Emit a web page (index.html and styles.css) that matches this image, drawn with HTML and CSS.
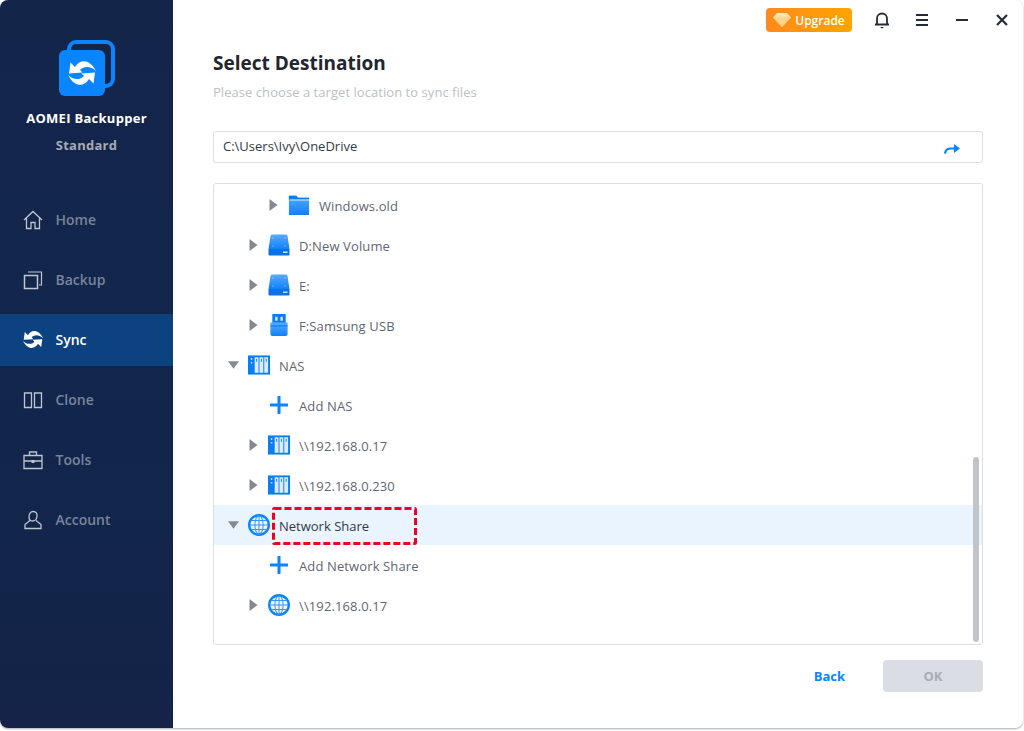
FILE: index.html
```html
<!DOCTYPE html>
<html lang="en">
<head>
<meta charset="utf-8">
<title>AOMEI Backupper</title>
<link rel="stylesheet" href="styles.css">
</head>
<body>
<svg class="defs" aria-hidden="true">
  <defs>
    <linearGradient id="blue" x1="0" y1="0" x2="0" y2="1"><stop offset="0" stop-color="#58abff"/><stop offset="1" stop-color="#0f80f7"/></linearGradient>
    <linearGradient id="gem" x1="0" y1="0" x2="0" y2="1"><stop offset="0" stop-color="#ffe9b8"/><stop offset="1" stop-color="#ffc766"/></linearGradient>
    <symbol id="i-sync" viewBox="9 20 28 26">
      <g fill="#fff">
        <path d="M16 27C21 18.500 31 19 37 31 32 26 25 25.500 21 30L23.500 32.500 10 33.500 11.500 22.500z"/>
      </g>
      <g fill="#fff" transform="rotate(180 23 33)">
        <path d="M16 27C21 18.500 31 19 37 31 32 26 25 25.500 21 30L23.500 32.500 10 33.500 11.500 22.500z"/>
      </g>
    </symbol>
    <symbol id="i-folder" viewBox="0 0 24 22">
      <path d="M1 1h8l2 2h12v18a1 1 0 0 1-1 1H2a1 1 0 0 1-1-1z" fill="url(#blue)"/>
      <path d="M1 1h8l2 2h12v2H1z" fill="#0a7df5"/>
      <path d="M2 5h21v1H2z" fill="#d8ecff"/>
    </symbol>
    <symbol id="i-drive" viewBox="0 0 22 22">
      <path d="M2.500 2a1.500 1.500 0 0 1 1.500-1.500h14A1.500 1.500 0 0 1 19.500 2L21.500 15H.5z" fill="url(#blue)"/>
      <path d="M.5 15h21v5.500a1 1 0 0 1-1 1h-19a1 1 0 0 1-1-1z" fill="#0a72e8"/>
      <path d="M15 17.500h4.500v1.400H15z" fill="#cfe6ff"/>
      <circle cx="5" cy="4" r=".6" fill="#cfe6ff"/><circle cx="17" cy="4" r=".6" fill="#cfe6ff"/><circle cx="5" cy="12" r=".6" fill="#cfe6ff"/><circle cx="17" cy="12" r=".6" fill="#cfe6ff"/>
    </symbol>
    <symbol id="i-usb" viewBox="0 0 22 23">
      <path d="M4 0h14v10H4z" fill="#0a7df5"/>
      <path d="M7 3h2.500v4H7zM12.500 3H15v4h-2.500z" fill="#d5e9ff"/>
      <path d="M2 9h18v12a2 2 0 0 1-2 2H4a2 2 0 0 1-2-2z" fill="url(#blue)"/>
      <path d="M2 12h18v1H2z" fill="#0a72e8"/>
    </symbol>
    <symbol id="i-nas" viewBox="0 0 23 20">
      <path d="M0 0h23v20H0z" fill="#0a7df5"/>
      <path d="M7 2h4v16H7zM12 2h4v16h-4zM17 2h4v16h-4z" fill="#dcedff"/>
      <path d="M3 3h1.500v1.500H3zM3 7h1.500v1.500H3z" fill="#fff"/>
      <path d="M8.500 3.500h1v3h-1zM13.500 3.500h1v3h-1zM18.500 3.500h1v3h-1z" fill="#0a7df5"/>
    </symbol>
    <symbol id="i-globe" viewBox="0 0 24 24">
      <circle cx="12" cy="12" r="10.700" fill="#eef6ff" stroke="#0a84ff" stroke-width="2.600"/>
      <g fill="none" stroke="#2f97ff" stroke-width="1.100">
        <ellipse cx="12" cy="12" rx="4.500" ry="10"/>
        <path d="M12 2v20M2 12h20M3.500 7.200h17M3.500 16.800h17"/>
      </g>
    </symbol>
    <symbol id="i-plus" viewBox="0 0 18 18">
      <path d="M7.500 0h3v7.500H18v3h-7.500V18h-3v-7.500H0v-3h7.500z" fill="#0a84ff"/>
    </symbol>
    <symbol id="i-right" viewBox="0 0 10 12"><path d="M1 0l8 6-8 6z" fill="#838a94"/></symbol>
    <symbol id="i-down" viewBox="0 0 12 10"><path d="M0 1h12L6 9z" fill="#838a94"/></symbol>
  </defs>
</svg>

<div class="window">
  <aside class="sidebar">
    <div class="brand">
      <svg class="logo" viewBox="0 0 56 56">
        <rect x="10" y="2" width="44" height="44" rx="7" fill="none" stroke="#0a84ff" stroke-width="4"/>
        <rect x="0" y="10" width="46" height="46" rx="6" fill="#0a84ff"/>
        <use href="#i-sync" x="9" y="20" width="28" height="26"/>
      </svg>
      <div class="brand-name">AOMEI Backupper</div>
      <div class="brand-edition">Standard</div>
    </div>
    <nav class="nav">
      <a class="nav-item">
        <svg class="nav-icon" viewBox="0 0 20 20"><path d="M1 10L10 1.500 19 10M3.500 8v10.500h4.500V12.500h4v6h4.500V8" fill="none" stroke="#c0c5cf" stroke-width="1.300"/></svg>
        <span>Home</span>
      </a>
      <a class="nav-item">
        <svg class="nav-icon" viewBox="0 0 20 20"><path d="M1.500 5.500h13v13h-13z" fill="none" stroke="#c0c5cf" stroke-width="1.500"/><path d="M5 2h13.500v13H16" fill="none" stroke="#c0c5cf" stroke-width="1.200"/></svg>
        <span>Backup</span>
      </a>
      <a class="nav-item active">
        <svg class="nav-icon" viewBox="0 0 20 20"><use href="#i-sync" x="0" y="0" width="20" height="19"/></svg>
        <span>Sync</span>
      </a>
      <a class="nav-item">
        <svg class="nav-icon" viewBox="0 0 20 20"><path d="M1.500 3h7v14.500h-7zM11.500 3h7v14.500h-7z" fill="none" stroke="#c0c5cf" stroke-width="1.300"/></svg>
        <span>Clone</span>
      </a>
      <a class="nav-item">
        <svg class="nav-icon" viewBox="0 0 20 20"><path d="M1 5.500h18v13H1zM6.500 5.500V2h7v3.500M1 11h18" fill="none" stroke="#c0c5cf" stroke-width="1.300"/><path d="M8.500 10h3v3h-3z" fill="#c0c5cf"/></svg>
        <span>Tools</span>
      </a>
      <a class="nav-item">
        <svg class="nav-icon" viewBox="0 0 20 20"><path d="M10 1.500c3 0 4.500 2 4 5-.4 2.500-2 4.500-4.500 4.500-2.300 0-3.500-1.800-3.500-4 0-3.500 2-5.500 4-5.500zM7 10.500l-5 4v4h16v-4l-5-4" fill="none" stroke="#c0c5cf" stroke-width="1.300"/></svg>
        <span>Account</span>
      </a>
    </nav>
  </aside>

  <main class="main">
    <header class="topbar">
      <button class="upgrade">
        <svg class="gem" viewBox="0 0 18 14"><path d="M4 0h10l4 4.500L9 14 0 4.500z" fill="url(#gem)"/><path d="M0 4.500h18L9 14z" fill="#ffd488"/></svg>
        <span>Upgrade</span>
      </button>
      <svg class="tool bell" viewBox="0 0 16 18"><path d="M3 13V7.500a5 5 0 0 1 10 0V13M1 13.500h14" fill="none" stroke="#262b3a" stroke-width="1.800"/><path d="M6 16h4l-2 1.500z" fill="#262b3a"/></svg>
      <svg class="tool" viewBox="0 0 14 14"><path d="M1 2h12M1 7h12M1 12h12" stroke="#262b3a" stroke-width="2"/></svg>
      <svg class="tool" viewBox="0 0 14 14"><path d="M1 7h12" stroke="#262b3a" stroke-width="2"/></svg>
      <svg class="tool" viewBox="0 0 14 14"><path d="M2 2l10 10M12 2L2 12" stroke="#262b3a" stroke-width="2.200"/></svg>
    </header>

    <h1 class="title">Select Destination</h1>
    <p class="subtitle">Please choose a target location to sync files</p>

    <div class="path">
      <span>C:\Users\Ivy\OneDrive</span>
      <svg class="go" viewBox="0 0 16 12"><path d="M1 10.500C1.500 6.500 4 5.500 7 5.500h5" fill="none" stroke="#0a84ff" stroke-width="2.200"/><path d="M10 1L16 5.500 10 10z" fill="#0a84ff"/></svg>
    </div>

    <section class="tree">
      <div class="row lvl2"><svg class="arrow"><use href="#i-right"/></svg><svg class="ico"><use href="#i-folder"/></svg><span class="label">Windows.old</span></div>
      <div class="row lvl1"><svg class="arrow"><use href="#i-right"/></svg><svg class="ico"><use href="#i-drive"/></svg><span class="label">D:New Volume</span></div>
      <div class="row lvl1"><svg class="arrow"><use href="#i-right"/></svg><svg class="ico"><use href="#i-drive"/></svg><span class="label">E:</span></div>
      <div class="row lvl1"><svg class="arrow"><use href="#i-right"/></svg><svg class="ico"><use href="#i-usb"/></svg><span class="label">F:Samsung USB</span></div>
      <div class="row"><svg class="arrow"><use href="#i-down"/></svg><svg class="ico"><use href="#i-nas"/></svg><span class="label">NAS</span></div>
      <div class="row lvl1"><span class="arrow"></span><svg class="ico plus"><use href="#i-plus"/></svg><span class="label">Add NAS</span></div>
      <div class="row lvl1"><svg class="arrow"><use href="#i-right"/></svg><svg class="ico"><use href="#i-nas"/></svg><span class="label">\\192.168.0.17</span></div>
      <div class="row lvl1"><svg class="arrow"><use href="#i-right"/></svg><svg class="ico"><use href="#i-nas"/></svg><span class="label">\\192.168.0.230</span></div>
      <div class="row selected"><svg class="arrow"><use href="#i-down"/></svg><svg class="ico"><use href="#i-globe"/></svg><span class="label">Network Share</span>
        <svg class="callout" viewBox="0 0 145 38"><rect x="1.500" y="1.500" width="142" height="35" rx="1" fill="none" stroke="#f0001c" stroke-width="3" stroke-dasharray="7 3"/></svg>
      </div>
      <div class="row lvl1"><span class="arrow"></span><svg class="ico plus"><use href="#i-plus"/></svg><span class="label">Add Network Share</span></div>
      <div class="row lvl1"><svg class="arrow"><use href="#i-right"/></svg><svg class="ico"><use href="#i-globe"/></svg><span class="label">\\192.168.0.17</span></div>
      <div class="scrollbar"></div>
    </section>

    <footer class="actions">
      <a class="back">Back</a>
      <button class="ok" disabled>OK</button>
    </footer>
  </main>
</div>
</body>
</html>
```

FILE: styles.css
```css
* { box-sizing: border-box; }
html, body { margin: 0; height: 100%; background: #fff; overflow: hidden; }
body { font-family: "Open Sans", "Noto Sans", sans-serif; font-size: 13px; }
.defs { display: block; width: 0; height: 0; overflow: hidden; }

.window {
  width: 1023px;
  height: 728px;
  display: flex;
  border-radius: 8px;
  overflow: hidden;
  background: #fff;
  box-shadow: 0 1px 2px #a9adb6;
}

/* sidebar */
.sidebar {
  width: 173px;
  flex: none;
  background: linear-gradient(180deg, #14254a 0%, #12264c 60%, #142347 100%);
  display: flex;
  flex-direction: column;
}
.brand { display: flex; flex-direction: column; align-items: center; padding: 40px 0 0 0; height: 194px; }
.logo { width: 56px; height: 56px; display: block; margin-bottom: 12px; }
.brand-name { color: #fff; font-weight: 700; font-size: 13px; line-height: 20px; letter-spacing: .28px; }
.brand-edition { color: #a5abb7; font-weight: 700; font-size: 13px; line-height: 20px; margin-top: 7px; letter-spacing: .25px; }
.nav { display: flex; flex-direction: column; gap: 8px; }
.nav-item { height: 52px; display: flex; align-items: center; gap: 12.5px; padding-left: 23px; color: #78849c; font-size: 14px; font-weight: 600; }
.nav-item span { padding-bottom: 2px; }
.nav-item.active { background: #0c4280; color: #fff; }
.nav-icon { width: 20px; height: 20px; flex: none; }

/* main */
.main { flex: 1; min-width: 0; padding: 0 40px; position: relative; }
.topbar { height: 40px; margin-right: -40px; padding-top: 8px; display: flex; align-items: flex-start; }
.upgrade {
  width: 86px; height: 24px; margin-left: 553px; padding: 0;
  border: 0; border-radius: 4px;
  background: linear-gradient(90deg, #ff8a1c, #ffa400);
  color: #fff; font: 600 12px "Open Sans", sans-serif;
  display: flex; align-items: center; justify-content: center; gap: 4px;
}
.gem { width: 18px; height: 14px; }
.tool { width: 14px; height: 14px; margin-top: 5px; margin-left: 26px; flex: none; }
.tool.bell { width: 16px; height: 18px; margin-top: 3px; margin-left: 22px; margin-right: -1px; }
.title { margin: 9px 0 0; font-size: 19px; line-height: 28px; font-weight: 700; color: #22252d; }
.subtitle { margin: 6px 0 0; font-size: 13px; line-height: 18px; color: #bcbfc5; font-weight: 400; letter-spacing: .05px; }
.path {
  margin-top: 30px; height: 32px;
  border: 1px solid #dcdfe3; border-radius: 3px;
  display: flex; align-items: center; justify-content: space-between;
  padding: 0 22px 0 9px; color: #333a45;
}
.path span { padding-bottom: 2px; }
.go { width: 16px; height: 12px; margin-top: 3px; }

/* tree */
.tree {
  margin-top: 20px; height: 462px; position: relative;
  border: 1px solid #dcdfe3; border-radius: 3px;
  padding-top: 1px; color: #5f6672; overflow: hidden;
}
.row { height: 40px; display: flex; align-items: center; padding-left: 14px; position: relative; }
.row.lvl1 { padding-left: 34px; }
.row.lvl2 { padding-left: 54px; }
.row.selected { background: #e9f4fe; color: #333a45; }
.label { padding-top: 2px; letter-spacing: .12px; }
.selected .label { letter-spacing: 0; }
.arrow { width: 11px; height: 12px; flex: none; margin-right: 9px; }
.ico { width: 22px; height: 22px; flex: none; margin-right: 9px; }
.ico.plus { width: 18px; height: 18px; margin: 0 11px 0 2px; }
.callout { position: absolute; left: 58px; top: 2px; width: 145px; height: 38px; }
.scrollbar {
  position: absolute; right: 3px; top: 273px; width: 6px; height: 185px;
  background: #c1c5cb; border-radius: 3px;
}

/* footer */
.actions { margin-top: 15px; display: flex; align-items: center; justify-content: flex-end; gap: 38px; }
.back { color: #0a84ff; font-weight: 700; font-size: 13px; }
.ok {
  width: 100px; height: 32px; padding: 0; border: 0; border-radius: 4px;
  background: #dadde3; color: #a9acb4; font: 700 13px "Open Sans", sans-serif;
}
```
